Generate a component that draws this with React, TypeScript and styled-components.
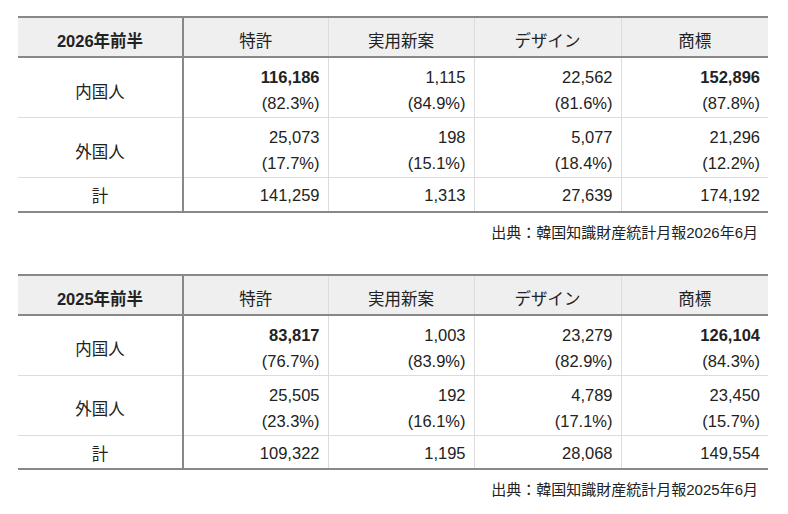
import React from "react";
import styled, { createGlobalStyle } from "styled-components";

type Cell = { value: string; share?: string; bold?: boolean };
type Row = { label: string; cells: Cell[]; total?: boolean };
type Block = { period: string; source: string; rows: Row[] };

const columns = ["特許", "実用新案", "デザイン", "商標"];

const blocks: Block[] = [
  {
    period: "2026年前半",
    source: "出典：韓国知識財産統計月報2026年6月",
    rows: [
      {
        label: "内国人",
        cells: [
          { value: "116,186", share: "(82.3%)", bold: true },
          { value: "1,115", share: "(84.9%)" },
          { value: "22,562", share: "(81.6%)" },
          { value: "152,896", share: "(87.8%)", bold: true },
        ],
      },
      {
        label: "外国人",
        cells: [
          { value: "25,073", share: "(17.7%)" },
          { value: "198", share: "(15.1%)" },
          { value: "5,077", share: "(18.4%)" },
          { value: "21,296", share: "(12.2%)" },
        ],
      },
      {
        label: "計",
        total: true,
        cells: [
          { value: "141,259" },
          { value: "1,313" },
          { value: "27,639" },
          { value: "174,192" },
        ],
      },
    ],
  },
  {
    period: "2025年前半",
    source: "出典：韓国知識財産統計月報2025年6月",
    rows: [
      {
        label: "内国人",
        cells: [
          { value: "83,817", share: "(76.7%)", bold: true },
          { value: "1,003", share: "(83.9%)" },
          { value: "23,279", share: "(82.9%)" },
          { value: "126,104", share: "(84.3%)", bold: true },
        ],
      },
      {
        label: "外国人",
        cells: [
          { value: "25,505", share: "(23.3%)" },
          { value: "192", share: "(16.1%)" },
          { value: "4,789", share: "(17.1%)" },
          { value: "23,450", share: "(15.7%)" },
        ],
      },
      {
        label: "計",
        total: true,
        cells: [
          { value: "109,322" },
          { value: "1,195" },
          { value: "28,068" },
          { value: "149,554" },
        ],
      },
    ],
  },
];

const GlobalStyle = createGlobalStyle`
  html, body {
    margin: 0;
    padding: 0;
    background: #fff;
  }
  body {
    font-family: "Liberation Sans", "Noto Sans CJK JP", sans-serif;
    color: #222;
  }
`;

const Page = styled.div`
  padding: 16px 20px 0 18px;
  width: 750px;
`;

const Section = styled.section`
  margin-bottom: 29px;
`;

const Table = styled.table`
  width: 750px;
  table-layout: fixed;
  border-collapse: collapse;
  font-size: 16.5px;
  border-top: 2px solid #888;
  border-bottom: 2px solid #888;
`;

const HeadCell = styled.th<{ $first?: boolean }>`
  height: 32px;
  padding: 6px 0 0;
  background: #efefef;
  text-align: center;
  font-weight: ${({ $first }) => ($first ? 700 : 400)};
  border-bottom: 2px solid #888;
  border-left: 1px solid #dcdcdc;
  border-right: ${({ $first }) => ($first ? "2px solid #888" : "1px solid #dcdcdc")};

  &:first-child {
    border-left: none;
  }
  &:last-child {
    border-right: none;
  }
`;

const BodyRow = styled.tr<{ $total?: boolean }>`
  height: ${({ $total }) => ($total ? "34px" : "60px")};
  border-bottom: 1px solid #dcdcdc;

  &:last-child {
    border-bottom: none;
  }
`;

const LabelCell = styled.th<{ $total?: boolean }>`
  padding: ${({ $total }) => ($total ? "2px 0 0" : "6px 0 0")};
  text-align: center;
  font-weight: 400;
  border-right: 2px solid #888;
`;

const ValueCell = styled.td<{ $total?: boolean }>`
  padding: ${({ $total }) => ($total ? "2px 8px 0" : "6px 8px 1px")};
  text-align: right;
  line-height: 26px;
  border-right: 1px solid #dcdcdc;

  &:last-child {
    border-right: none;
  }
`;

const Value = styled.div<{ $bold?: boolean }>`
  font-weight: ${({ $bold }) => ($bold ? 700 : 400)};
`;

const Source = styled.p`
  margin: 8px 10px 0 0;
  line-height: 24px;
  font-size: 15px;
  text-align: right;
`;

export default function App() {
  return (
    <Page>
      <GlobalStyle />
      {blocks.map((block) => (
        <Section key={block.period}>
          <Table>
            <colgroup>
              <col style={{ width: 165 }} />
              <col style={{ width: 145 }} />
              <col style={{ width: 146 }} />
              <col style={{ width: 147 }} />
              <col style={{ width: 147 }} />
            </colgroup>
            <thead>
              <tr>
                <HeadCell $first>{block.period}</HeadCell>
                {columns.map((c) => (
                  <HeadCell key={c}>{c}</HeadCell>
                ))}
              </tr>
            </thead>
            <tbody>
              {block.rows.map((row) => (
                <BodyRow key={row.label} $total={row.total}>
                  <LabelCell $total={row.total}>{row.label}</LabelCell>
                  {row.cells.map((cell, i) => (
                    <ValueCell key={i} $total={row.total}>
                      <Value $bold={cell.bold}>{cell.value}</Value>
                      {cell.share && <Value>{cell.share}</Value>}
                    </ValueCell>
                  ))}
                </BodyRow>
              ))}
            </tbody>
          </Table>
          <Source>{block.source}</Source>
        </Section>
      ))}
    </Page>
  );
}
